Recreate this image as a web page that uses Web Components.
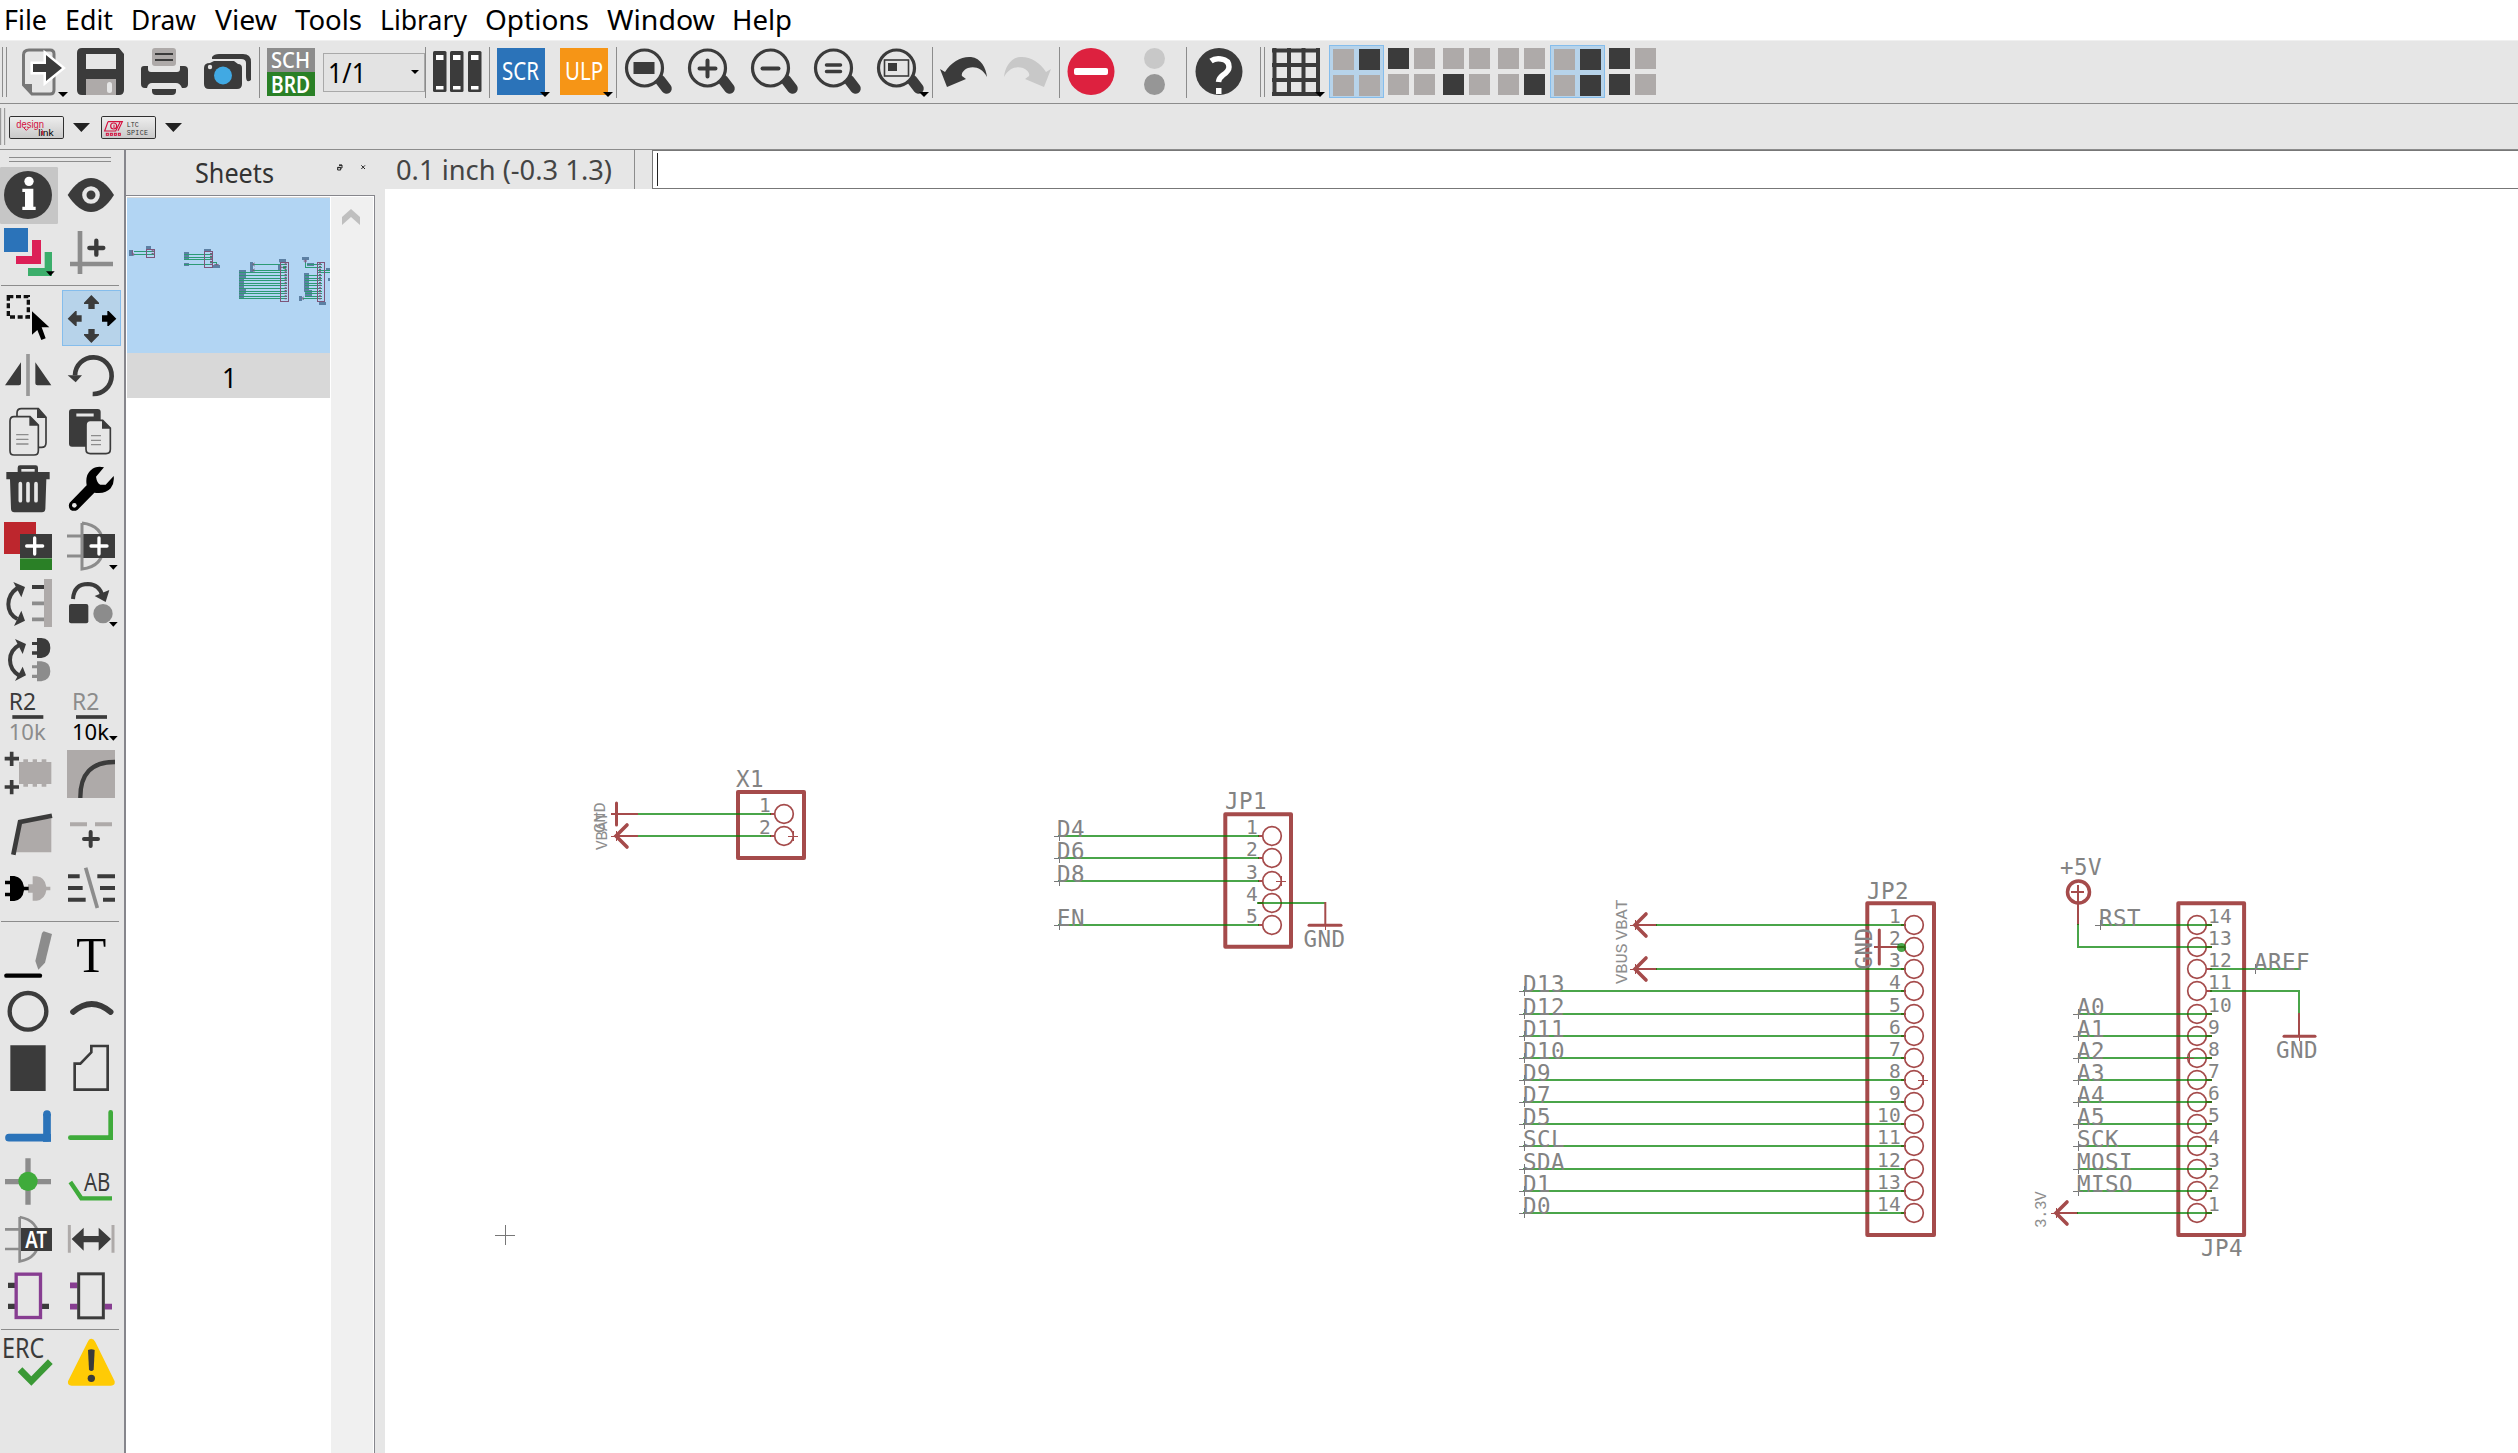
<!DOCTYPE html>
<html lang="en">
<head>
<meta charset="utf-8">
<title>Schematic editor</title>
<style>
html,body{margin:0;height:100%;overflow:hidden;background:#e6e6e6}
body{font-family:"Noto Sans","Open Sans",sans-serif;color:#000}
</style>
</head>
<body>
<schematic-app></schematic-app>
<script>
const D='#3b3b3b', G='#8c8c8c', L='#aeaaa9';

/* Text set to an exact width */
class FitText extends HTMLElement{
  connectedCallback(){
    const w=+this.getAttribute('w'), s=+this.getAttribute('size')||28, t=this.getAttribute('text');
    this.attachShadow({mode:'open'}).innerHTML=`<style>:host{display:block;flex:none;width:${w}px;height:40px}svg{display:block;overflow:visible}</style>
    <svg width="${w}" height="40"><text x="0" y="30" font-size="${s}" fill="currentColor" textLength="${w}" lengthAdjust="spacingAndGlyphs">${t}</text></svg>`;
  }
}
customElements.define('fit-text',FitText);

class MenuBar extends HTMLElement{
  connectedCallback(){
    const m=[['File',4,43],['Edit',65,48],['Draw',131,65],['View',215,62],['Tools',295,67],['Library',380,87],['Options',485,104],['Window',607,108],['Help',732,60]];
    let e=0;
    this.attachShadow({mode:'open'}).innerHTML=`<style>:host{display:flex;height:40px;background:#fff;border-bottom:1px solid #f0f0f0;color:#000}</style>`+
      m.map(([t,x,w])=>{const g=x-e;e=x+w;return `<fit-text text="${t}" w="${w}" size="27.5" style="margin-left:${g}px"></fit-text>`}).join('');
  }
}
customElements.define('menu-bar',MenuBar);

/* Main toolbar: every icon is drawn in window coordinates */
const tri=(x,y=92)=>`<path d="M${x} ${y}h10l-5 5z" fill="#000"/>`;
const sep=x=>[x,1,`<path d="M${x+.5} 47V98" stroke="#8c8c8c"/>`];
const lens=(x,inner)=>`<path d="M${x+35} 80L${x+41.5} 88.500" stroke="${D}" stroke-width="10.5" stroke-linecap="round"/><circle cx="${x+19.5}" cy="68" r="18" fill="#e6e6e6" stroke="${D}" stroke-width="3.2"/>${inner}`;
const tile=(x,p,sel)=>{const o=sel?1:0;return [x,55,(sel?`<rect x="${x+.5}" y="45.5" width="54" height="52" fill="#b7d3ea" stroke="#85bdec"/>`:'')+
  [0,1,2,3].map(i=>`<rect x="${x+4+(i%2)*26}" y="${48+o+(i>1?26:0)}" width="21" height="21" fill="${p[i]=='1'?D:L}"/>`).join('')]};
const vt=(t,x,y,s,w,c,b='')=>`<text x="${x}" y="${y}" font-size="${s}" textLength="${w}" lengthAdjust="spacingAndGlyphs" fill="${c}" ${b}>${t}</text>`;
const top1=[
 [2,5,`<path d="M2.5 47V97M6.5 47V97" stroke="#8c8c8c"/>`],
 [16,48,`<path d="M29 50H50Q54 50 54 54V90Q54 94 50 94H32L23.500 85V55Q23.500 50 29 50Z" fill="#e6e6e6" stroke="#777" stroke-width="3"/><path d="M24 84H32V94Z" fill="#777"/><path d="M33 64H46V55L62 68L46 81V72H33Z" fill="${D}" stroke="#fff" stroke-width="5" paint-order="stroke"/>${tri(58)}`],
 [77,48,`<path d="M82 48H119L124 54V90Q124 95 119 95H82Q77 95 77 90V53Q77 48 82 48Z" fill="${D}"/><rect x="86" y="54" width="30" height="15" fill="#e6e6e6"/><path d="M86 79H116V95H86Z" fill="${L}"/><rect x="107" y="82" width="5" height="11" rx="2.500" fill="#e6e6e6"/>`],
 [140,48,`<rect x="152" y="48" width="24" height="18" rx="3" fill="${L}"/><path d="M155 54H173M155 60H173" stroke="${D}" stroke-width="2"/><path d="M141 69Q141 66 144 66H148V69Q148 72 151 72H177Q180 72 180 69V66H184Q188 66 188 70V84Q188 88 184 88H182Q180 83 176 83H152Q148 83 147 88H145Q141 88 141 84Z" fill="${D}"/><path d="M152 89H176V91Q176 95 172 95H156Q152 95 152 91Z" fill="${D}"/>`],
 [204,48,`<path d="M212 57Q214 54 219 54H243Q251 54 251 62V80Q246 84 246 76V63Q246 59 241 59H212Z" fill="${D}"/><path d="M210 63L214 61H234L238 64Q242 64 242 68V84Q242 89 237 89H209Q204 89 204 84V68Q204 63 210 63Z" fill="${D}"/><circle cx="223" cy="75.500" r="9" fill="#41a9e3"/><circle cx="210" cy="67" r="2.200" fill="#e6e6e6"/>`],
 sep(259),
 [267,48,`<rect x="267" y="48" width="48" height="24" fill="#8c8c8c"/><rect x="267" y="72" width="48" height="24" fill="#2a8026"/>${vt('SCH',271,68,22.5,39,'#fff','font-weight="500"')}${vt('BRD',271,93,22.5,39,'#fff','font-weight="600"')}`],
 [323,102,`<rect x="323.500" y="53.500" width="101" height="38" fill="#e3e3e3" stroke="#a9a9a9"/>${vt('1/1',328,83,28,38,'#000')}<path d="M411 70h8l-4 4z"/>`],
 sep(425),
 [433,48,[433,450,468].map(x=>`<rect x="${x}" y="51" width="13.500" height="41" rx="1.500" fill="${D}"/><path d="M${x+3} 55h7.500v5h-7.500zM${x+3} 86h7.500v3.500h-7.500z" fill="#fff"/>`).join('')],
 sep(489),
 [497,48,`<rect x="497" y="48" width="48" height="47" fill="#2b73b9"/>${vt('SCR',502,80,25,37,'#fff')}${tri(540)}`],
 [560,48,`<rect x="560" y="48" width="48" height="47" fill="#f69516"/>${vt('ULP',565,80,25,38,'#fff')}${tri(603)}`],
 sep(616),
 [625,48,lens(625,`<rect x="633.500" y="62" width="21" height="12" fill="${D}"/>`)],
 [688,48,lens(688,`<path d="M699.500 68.500h16M707.500 60.500v16" stroke="${D}" stroke-width="4" stroke-linecap="round"/>`)],
 [751,48,lens(751,`<path d="M762.500 68.500h16" stroke="${D}" stroke-width="4" stroke-linecap="round"/>`)],
 [814,48,lens(814,`<path d="M826.500 65h14M826.500 71.500h14" stroke="${D}" stroke-width="3.500" stroke-linecap="round"/>`)],
 [877,48,lens(877,`<rect x="884.500" y="60" width="24" height="16" fill="none" stroke="${D}" stroke-width="1.600"/><rect x="888" y="63" width="9" height="8" fill="${D}"/>`)+tri(919)],
 sep(932),
 [940,48,`<path d="M940 69L945 72C951 62 962 56 971 57C981 58 986 68 987 77C982 68 975 66 968 68C963 70 961 74 962 76L966 79L947 87Z" fill="${D}"/>`],
 [1004,48,`<path d="M1051 69L1046 72C1040 62 1029 56 1020 57C1010 58 1005 68 1004 77C1009 68 1016 66 1023 68C1028 70 1030 74 1029 76L1025 79L1044 87Z" fill="#c8c8c8"/>`],
 sep(1059),
 [1068,48,`<circle cx="1091" cy="71.500" r="23.500" fill="#dd213f"/><rect x="1074" y="68" width="34" height="7" rx="2" fill="#fff"/>`],
 [1143,24,`<circle cx="1154.500" cy="58.500" r="10.500" fill="#c8c8c8"/><circle cx="1154.500" cy="84.500" r="10.500" fill="#969696"/>`],
 sep(1186),
 [1195,48,`<circle cx="1219" cy="71.500" r="23.500" fill="${D}"/><path d="M1211 61Q1215 58 1221 59Q1229 60 1229 67Q1229 71 1223 75Q1219 78 1218.500 82" fill="none" stroke="#fff" stroke-width="5.500"/><path d="M1216 88h5.500v6h-5.500z" fill="#fff"/>`],
 [1260,6,`<path d="M1260.500 47V97M1264.500 47V97" stroke="#8c8c8c"/>`],
 [1272,48,`<path d="M1272 50.500H1320M1272 65H1320M1272 80H1320M1272 94H1320M1274.500 48V96M1289 48V96M1303.500 48V96M1318 48V96" stroke="${D}" stroke-width="4"/>${tri(1315)}`],
 tile(1329,'0100',1),tile(1384,'1000'),tile(1439,'0010'),tile(1494,'0001'),tile(1550,'0101',1),tile(1605,'1010')
];
class ToolBar extends HTMLElement{
  connectedCallback(){
    let e=0;
    this.attachShadow({mode:'open'}).innerHTML=`<style>:host{display:flex;height:55px;padding-top:7px;border-bottom:1px solid #8c8c8c;background:#e6e6e6}svg{flex:none;overflow:visible;font-family:"Noto Sans",sans-serif}</style>`+
     top1.map(([x,w,c])=>{const g=x-e;e=x+w;return `<svg style="margin-left:${g}px" width="${w}" height="48" viewBox="${x} 48 ${w} 48">${c}</svg>`}).join('');
  }
}
customElements.define('tool-bar',ToolBar);

class PluginBar extends HTMLElement{
  connectedCallback(){
    this.attachShadow({mode:'open'}).innerHTML=`<style>:host{display:flex;height:45px;border-bottom:1px solid #8c8c8c;background:#e6e6e6}svg{overflow:visible;font-family:"Liberation Mono",monospace}</style>
    <svg width="200" height="45" viewBox="0 312 600 135">
    <defs><linearGradient id="b" x2="0" y2="1"><stop offset="0" stop-color="#eee"/><stop offset="1" stop-color="#c9c9c9"/></linearGradient></defs>
    <path d="M2 324V435M14 324V435" stroke="#8c8c8c" stroke-width="3"/>
    <rect x="28.500" y="349.500" width="162" height="66" rx="4" fill="url(#b)" stroke="#303030" stroke-width="3"/>
    <rect x="304.500" y="349.500" width="162" height="66" rx="4" fill="url(#b)" stroke="#303030" stroke-width="3"/>
    <text x="49" y="384" font-size="32" textLength="83" lengthAdjust="spacingAndGlyphs" fill="#d4103f" font-family="Liberation Sans">design</text>
    <path d="M72 384l7 7 6-6" fill="none" stroke="#d4103f" stroke-width="3"/>
    <text x="115" y="407" font-size="25" textLength="46" lengthAdjust="spacingAndGlyphs" font-family="Liberation Sans">link</text><path d="M127 391V405" stroke="#d4103f" stroke-width="3"/>
    <path d="M219 369H270L244 396ZM495 369H546L520 396Z" fill="#222"/>
    <path d="M324 365H367L354 392M324 365L314 393H347L360 367" fill="none" stroke="#d4103f" stroke-width="3.500"/><circle cx="341" cy="378" r="9" fill="none" stroke="#d4103f" stroke-width="3.500"/><path d="M342 374V384" stroke="#d4103f" stroke-width="3"/>
    <g fill="none" stroke="#d4103f" stroke-width="3"><rect x="319" y="400" width="6" height="6"/><rect x="331" y="400" width="6" height="6"/><rect x="343" y="400" width="6" height="6"/><rect x="355" y="400" width="6" height="6"/></g>
    <text x="380" y="382" font-size="20" textLength="36" fill="#333">LTC</text><text x="380" y="405" font-size="20" textLength="64" fill="#333">SPICE</text></svg>`;
  }
}
customElements.define('plugin-bar',PluginBar);

/* Tool palette: two columns, drawn at three units per pixel */
const t3=(x,y)=>`<path d="M${x} ${y}h26l-13 14z" fill="#000"/>`;
const P=(d,c,w,x='')=>`<path d="${d}" fill="none" stroke="${c}" stroke-width="${w}" ${x}/>`;
const F=(d,c=D)=>`<path d="${d}" fill="${c}"/>`;
const R='stroke-linecap="round"';
const plug=(x,y,c)=>F(`M${x} ${y+2}H${x+15}V${y-10}H${x+28}Q${x+55} ${y-8} ${x+55} ${y+20}Q${x+55} ${y+46} ${x+28} ${y+50}H${x+15}V${y+40}H${x}V${y+30}H${x+15}V${y+11}H${x}Z`,c);
const tools=[
[[81,`<rect y="81" width="174" height="171" rx="4" fill="#c6c6c6"/><circle cx="84" cy="165" r="72" fill="${D}"/><circle cx="87" cy="124" r="14" fill="#fff"/>${F('M67 146H100V200H107V210H67V200H75V156H67Z','#fff')}`,
  F('M203 165Q236 114 273 114Q310 114 342 165Q310 216 273 216Q236 216 203 165Z')+`<circle cx="273" cy="165" r="20" fill="none" stroke="#e6e6e6" stroke-width="13"/>`],
 [252,F('M12 264H84V336H12Z','#2b73b9')+F('M96 300H123V372H48V348H96Z','#dc1f57')+F('M134 336H156V408H84V384H134Z','#3bae6b')+t3(138,394),
  P('M240 273V402M210 372H339',G,14)+P('M289 302V344M268 324H310',D,13,R)]],
[[450,`<path d="M25 470H85V531H25Z" fill="none" stroke="#111" stroke-width="10" stroke-dasharray="15 8"/>`+F('M96 514L148 562H125L137 595L124 600L112 570L96 584Z','#000'),
  `<rect x="187.500" y="451.500" width="174" height="165" fill="#b7d3ea" stroke="#85bdec" stroke-width="3"/>`+F('M274 465L297 488V492H284V507H265V492H252V488ZM274 609L297 586V582H284V567H265V582H252V586ZM203 536L226 513H230V526H245V545H230V558H226Z')+F('M349 536L326 513H322V526H306V545H322V558H326Z','#000')],
 [621,P('M84 642V768','#999',11)+F('M63 667V730Q63 736 57 736H15ZM106 667V730Q106 736 112 736H154Z'),
  P('M278 762A55 55 0 1 0 225 706',D,14)+F('M203 706H246L227 727Z')],
 [792,`<g fill="#e6e6e6" stroke="${D}" stroke-width="5"><path d="M64 806H115L138 832V908Q138 922 124 922H64Q51 922 51 909V819Q51 806 64 806Z"/><path d="M42 830H90L115 855V932Q115 945 102 945H42Q30 945 30 932V843Q30 830 42 830Z"/></g>`+F('M88 829V857H116ZM111 805V834H140Z')+P('M50 884H84M50 898H84M50 912H84',G,4,R),
  `<rect x="207" y="807" width="95" height="113" rx="9" fill="${D}"/><path d="M229 825H281" stroke="#e6e6e6" stroke-width="9"/><path d="M271 841H308L331 864V928Q331 941 318 941H271Q258 941 258 928V854Q258 841 271 841Z" fill="#e6e6e6" stroke="${D}" stroke-width="5"/>`+F('M306 839V866H333Z')+P('M273 887H303M273 901H303M273 914H303',G,4)],
 [963,F('M53 996V983Q53 976 60 976H107Q114 976 114 983V996H149V1018H139L136 1107Q135 1117 126 1117H43Q34 1117 33 1107L30 1018H19V996Z')+P('M64 991H104','#e6e6e6',8)+P('M61 1031V1082M84 1031V1082M108 1031V1082','#e6e6e6',11,R),
  F('M312 982Q289 976 273 990Q255 1005 260 1036L209 1088Q203 1099 211 1109Q222 1116 233 1109L283 1058Q316 1063 332 1045Q344 1028 341 1008L317 1034L301 1034Q291 1030 288 1010Z','#000')+`<circle cx="223" cy="1096" r="7" fill="#e6e6e6"/>`],
 [54,F('M12 66H108V162H12Z','#bd262d')+F('M60 102H156V174H60Z')+F('M60 175H156V210H60Z','#2a8026')+P('M104 114V162M80 138H128','#fff',10,R),
  P('M246 69V207Q310 200 310 138T246 69M201 108H246M201 168H246',G,9)+F('M250 102H345V174H250Z')+P('M297 114V162M273 138H321','#fff',10,R)+t3(327,195)],
 [225,P('M52 264Q25 283 25 313T52 357',D,12)+F('M40 246L75 261L64 292ZM42 378L75 362L64 332Z')+F('M132 237H156V381H132Z',L)+P('M96 261H132',D,12)+P('M96 310H132M96 358H132',G,11),
  P('M219 297Q222 252 264 252Q298 253 307 287',D,12)+F('M284 288L328 270L317 306Z')+`<rect x="207" y="312" width="58" height="58" rx="6" fill="${D}"/><circle cx="309" cy="341" r="29" fill="${G}"/>`+t3(327,366)],
 [396,P('M58 435Q30 450 30 480T58 527',D,12)+F('M45 417L78 432L68 462ZM45 543L78 526L68 500Z')+plug(96,424,D)+plug(96,494,G),''],
 [567,vt('R2',26,630,68,82,D)+P('M37 651H130',D,11)+vt('10k',26,720,67,111,G),
  vt('R2',216,630,68,82,G)+P('M228 651H321',D,11)+vt('10k',216,720,67,111,'#000')+t3(327,708)],
 [738,P('M35 755V798M14 776H57M35 840V883M14 861H57',D,11)+F('M57 786H70V778H84V786H98V778H111V786H125V778H139V786H154V852H139V860H125V852H111V860H98V852H84V860H70V852H57Z',L),
  F('M201 750H345V894H201Z',L)+P('M241 894Q240 785 345 786',D,13)],
 [909,F('M61 965L154 955V1057H43Z',L)+P('M40 1064L60 966L156 947',D,14),
  P('M210 973H261M285 973H336',L,12)+P('M272 996V1038M252 1017H294',D,12,R)],
 [1080,F('M84 1153H98V1129H110Q135 1132 139 1160H151V1171H139Q135 1199 110 1202H98V1178H84Z',L)+F('M15 1142H30V1128H43Q68 1132 72 1160H86V1171H72Q68 1200 43 1203H30V1189H15V1178H30V1153H15Z','#000'),
  P('M204 1129H239M292 1129H345M204 1164H248M300 1164H345M204 1199H257M309 1199H345',D,12)+P('M257 1103L292 1224',G,11)]],
[[48,P('M19 197H120','#000',13,R)+F('M131 64L156 72L135 158L115 179L106 153L126 69Z',G),
  `<text x="229" y="185" font-size="154" font-family="Liberation Serif" textLength="90" lengthAdjust="spacingAndGlyphs">T</text>`],
 [219,`<circle cx="84" cy="304" r="55" fill="none" stroke="${D}" stroke-width="13"/>`,P('M219 306Q275 258 332 306',D,17,R)],
 [390,F('M31 406H137V543H31Z'),P('M274 408H323V539H224V461H241L274 427Z',D,8)],
 [561,P('M27 683H141',"#2b73b9",23,R)+P('M141 612V695',"#2b73b9",23)+`<circle cx="141" cy="612" r="11.500" fill="#2b73b9"/>`+F('M129 672H153V695H129Z','#2b73b9'),
  P('M211 683H332V607','#3fab3b',14,R)+F('M325 676H339V690H325Z','#3fab3b')],
 [732,P('M84 745V884M15 815H153',G,16)+`<circle cx="84" cy="814" r="29" fill="#3fab3b"/>`,
  vt('AB',252,843,77,79,D)+P('M211 816L244 865H336','#3fab3b',13)],
 [903,P('M59 921V1054Q116 1045 116 988T59 921M15 958H59M15 1017H59',G,8)+F('M63 954H156V1023H63Z')+vt('AT',76,1013,68,65,'#fff','font-weight="600"'),
  P('M208 945V1028M339 945V1028',L,9)+F('M215 987L251 953V978H296V953L333 987L296 1022V997H251V1022Z')],
 [1074,P('M24 1126H45M24 1189H45M125 1189H147',D,16)+`<rect x="48.500" y="1092.500" width="73" height="130" fill="none" stroke="#873d91" stroke-width="10"/>`,
  P('M210 1126H232M210 1190H232M314 1190H336','#873d91',17)+`<rect x="236" y="1091.500" width="74" height="132" fill="none" stroke="${D}" stroke-width="9"/>`]],
[[1272,vt('ERC',6,1343,80,127,D)+P('M60 1379L94 1413L151 1355','#3a9935',20),
  F('M274 1286Q281 1286 286 1296L344 1414Q346 1427 333 1427H215Q202 1427 204 1414L263 1296Q267 1286 274 1286Z','#ffcb05')+F('M264 1320Q274 1315 284 1320L281 1379Q274 1387 267 1379Z')+`<circle cx="274" cy="1405" r="11" fill="${D}"/>`]]
];
class ToolPalette extends HTMLElement{
  connectedCallback(){
    this.attachShadow({mode:'open'}).innerHTML=`<style>:host{display:flex;flex-direction:column;flex:none;background:#e6e6e6;border-right:2px solid #86868c;box-sizing:border-box;width:126px;padding-top:7px}
    .h{height:3px;margin:0 13px 5px 9px;border:solid #8c8c8c;border-width:1px 0;flex:none}.r{display:flex;gap:3px;height:57px;flex:none}svg{flex:none;overflow:visible;font-family:"Noto Sans",sans-serif}.s{height:1px;margin:4px 5px 4px 1px;background:#8c8c8c;flex:none}</style><div class="h"></div>`+
    tools.map(g=>g.map(([y,a,b])=>`<div class="r"><svg width="59" height="57" viewBox="0 ${y} 177 171">${a}</svg><svg width="59" height="57" viewBox="186 ${y} 177 171">${b}</svg></div>`).join('')).join('<div class="s"></div>');
  }
}
customElements.define('tool-palette',ToolPalette);

class SheetsPanel extends HTMLElement{
  connectedCallback(){
    const c='#2c9a74',r='#7d5579',lb='#5c80a3';
    const bx=a=>a.map(([x,y,w,h])=>`<rect x="${x}" y="${y}" width="${w}" height="${h}" fill="${lb}"/>`).join('');
    const snap=y=>27+3*Math.floor((y-27)/3)+1.5;
    const ln=(x1,x2,ys)=>ys.map(y=>`M${x1} ${snap(y)}H${x2}`).join('');
    this.attachShadow({mode:'open'}).innerHTML=`<style>:host{display:flex;flex-direction:column;width:259px;flex:none;background:#e6e6e6;color:#333}
    .hd{height:45px;display:flex;flex:none;padding-left:69px;align-items:flex-start}.hd svg{overflow:visible}
    .b{flex:1;width:246px;border:solid #86868c;border-width:1px 1px 0 0;background:#fff;display:flex;justify-content:space-between;padding:1px 1px 0 1px}
    .c{height:201px;width:203px;background:#d8d8d8}.c svg{display:block;margin-top:1px}.n{width:14px;margin:5px auto 0;color:#000}
    .sb{width:42px;background:#f0f0f0}.sb svg{display:block;margin:11px 0 0 10px}</style>
    <div class="hd"><fit-text text="Sheets" w="79" size="27.5" style="margin-top:3px"></fit-text><svg width="40" height="20" style="margin:15px 0 0 62px" viewBox="0 51 120 60"><path d="M9 51h9v9h-3M5 58h9v8H5zM9 52h9M5 59h9" fill="none" stroke="#222" stroke-width="3"/><path d="M76 52l11 11M87 52l-11 11" stroke="#222" stroke-width="3"/></svg></div>
    <div class="b"><div class="c"><svg width="203" height="155" viewBox="21 27 609 465"><rect x="21" y="27" width="609" height="465" fill="#b2d5f3"/>
    ${bx([[27,183,12,18],[78,171,15,11],[192,189,15,24],[192,222,15,9],[252,180,21,8],[278,228,22,9],[390,219,9,30],[477,210,21,10],[474,225,9,21],[357,243,21,24],[357,267,15,32],[357,299,21,16],[357,315,15,15],[546,204,21,9],[561,222,21,9],[618,237,12,9],[624,267,6,9],[552,252,15,57],[555,303,21,20],[537,321,9,15],[597,339,21,9]])}
    <path d="${ln(42,102,[187,196])}${ln(192,276,[196,205,211,226])}M270 220.500H289.500V227${ln(400,500,[226,244])}${ln(357,500,[250,259,268,274,283,289,298,307,313,322,328])}M556.500 220V235.500H606M561 226.500H606M594 244.500H630M594 250.500H630${ln(555,606,[259,268,274,283,289,298,307,313,322])}M549 328.500H606" fill="none" stroke="${c}" stroke-width="3" shape-rendering="crispEdges"/>
    <g fill="none" stroke="${r}" stroke-width="3"><path d="M79.500 181.500H103.500V205.500H79.500ZM253.500 187.500H277.500V235.500H253.500ZM481.500 220.500H505.500V337.500H481.500ZM592.500 220.500H613.500V337.500H592.500Z" shape-rendering="crispEdges"/><path d="M37 184v14M41 193v7M283 227h13M404 222l-6 4 6 5M404 240l-6 4 6 5M482 228v15M482 235h18M551 216h10M556 212v9M551 324l-5 4 5 5"/><path d="M98 184v15M273 192v38M497 223v108M600 223v108" stroke-dasharray="4 4" stroke-width="6"/></g><rect x="489" y="232" width="9" height="7" fill="#22865f"/></svg>
    <div class="n"><fit-text text="1" w="15" size="28"></fit-text></div></div>
    <div class="sb"><svg width="20" height="18" viewBox="0 0 20 18"><path d="M1 9L10 1L19 9V17L10 9L1 17Z" fill="#bfbfbf"/></svg></div></div>`;
  }
}
customElements.define('sheets-panel',SheetsPanel);

class CommandRow extends HTMLElement{
  connectedCallback(){
    this.attachShadow({mode:'open'}).innerHTML=`<style>:host{display:flex;height:39px;flex:none;background:#e6e6e6;color:#444}.v{width:1px;height:39px;margin-left:22px;background:#8c8c8c}
    .i{flex:1;margin-left:17px;height:37px;background:#fff;border:solid #777;border-width:1px 0 1px 1px;display:flex}.i span{width:1px;height:33px;margin:2px 0 0 4px;background:#222}</style>
    <fit-text text="0.1 inch (-0.3 1.3)" w="216" size="27" style="margin-left:11px"></fit-text><div class="v"></div><div class="i"><span></span></div>`;
  }
}
customElements.define('command-row',CommandRow);

class SchematicCanvas extends HTMLElement{
  connectedCallback(){
    const W='rgba(0,128,0,.71)',M='#a54b4b',o=[];
    const wire=d=>o.push(`<path d="${d}" fill="none" stroke="${W}" stroke-width="2"/>`);
    const red=(d,w=2)=>o.push(`<path d="${d}" fill="none" stroke="${M}" stroke-width="${w}" stroke-linecap="${w>2?'round':'butt'}"/>`);
    const cross=(x,y,c='#777',s=5)=>o.push(`<path d="M${x-s} ${y+.5}H${x+s}M${x+.5} ${y-s}V${y+s}" stroke="${c}"/>`);
    const box=(x,y,w,h)=>o.push(`<rect x="${x}" y="${y}" width="${w}" height="${h}" fill="none" stroke="${M}" stroke-width="4" stroke-linejoin="round"/>`);
    const label=(t,x,y)=>o.push(`<text x="${x-1}" y="${y+.5}" font-size="22.500" letter-spacing=".450">${t}</text>`);
    const pin=(t,x,y,a='end')=>o.push(`<text x="${x}" y="${y}" font-size="19.500" letter-spacing=".26" text-anchor="${a}">${t}</text>`);
    const vert=(t,x,y,s=15.5,l=.7)=>o.push(`<text transform="translate(${x} ${y}) rotate(-90)" font-size="${s}" letter-spacing="${l}" ${s<20?'font-family="Liberation Mono" style="fill:#8e8e8e"':''}>${t}</text>`);
    const ring=(x,y)=>o.push(`<circle cx="${x}" cy="${y}" r="9.300" fill="none" stroke="${M}" stroke-width="1.700"/>`);
    const arrow=(x,y)=>{red(`M${x+11} ${y-11}L${x} ${y}L${x+11} ${y+11}`,3.6);red(`M${x} ${y}h22`);cross(x,y,M)};
    const ys=[925,947,969,991,1014,1036,1058,1080,1102,1124,1146,1169,1191,1213];

    label('X1',737,786.5);box(738,792,66,66);
    [814,836].forEach((y,i)=>{ring(784,y);red(`M770 ${y}h5`);pin(i+1,771,y-2);wire(`M637 ${y}H771`)});
    red('M616.500 803V825',3);red('M611 814H638');arrow(616,836);cross(793,836,M);
    vert('GND',605,833,17,0);vert('VBAT',607,850,16,-.1);

    label('JP1',1226,808.5);box(1225.3,814.3,65.7,132.4);
    [836,858,881,903,925].forEach((y,i)=>{ring(1272,y);red(`M1258 ${y}h5`);pin(i+1,1258,y-2.5);
      if(i!=3){wire(`M1058 ${y}H1259`);cross(1059,y);label(['D4','D6','D8','','EN'][i],1058,y)}});
    wire('M1257 903H1326');red('M1325.300 902V925');red('M1309 925.300H1341',3);cross(1325,925,M);label('GND',1304.5,946.5);cross(1281,881,M);

    label('JP2',1868,898);box(1867.3,903.3,66.7,331.6);
    const n=['D13','D12','D11','D10','D9','D7','D5','SCL','SDA','D1','D0'];
    ys.forEach((y,i)=>{ring(1914,y);if(i!=1){red(`M1901 ${y}h5`)}pin(i+1,1901,y-2.5);
      if(i>2){wire(`M1523 ${y}H1904`);cross(1524,y);label(n[i-3],1524,y)}});
    [925,969].forEach(y=>{arrow(1635,y);wire(`M1656 ${y}H1904`)});
    red('M1879.300 930V964',3);red('M1874 947H1905');o.push(`<circle cx="1901.500" cy="947.500" r="4.600" fill="${W}"/>`);
    vert('GND',1872,969.5,22.5,.45);vert('VBAT',1627,940,17,0);vert('VBUS',1627,984,17,0);cross(1923,1080,M);

    box(2178.3,903.3,65.8,331.6);label('JP4',2202,1255);label('+5V',2061,874);
    const m=['RST','','','','A0','A1','A2','A3','A4','A5','SCK','MOSI','MISO',''];
    ys.forEach((y,i)=>{ring(2197,y);red(`M2206 ${y}h6`);pin(14-i,2208,y-2.5,'start');
      if(m[i]){const x=i?2078:2100;wire(`M${x} ${y}H2212`);cross(x,y);label(m[i],x,y)}});
    o.push(`<circle cx="2078.500" cy="892" r="11" fill="none" stroke="${M}" stroke-width="3.500"/>`);
    red('M2071 892H2084M2078 885V925');wire('M2078 924V947H2212');
    wire('M2210 969H2300');cross(2255,969);label('AREF',2255,969);
    wire('M2210 991H2299V1014');red('M2299 1013V1036');red('M2284 1036.300H2315',3);cross(2299,1036,M);label('GND',2277,1057.5);
    arrow(2056,1213);wire('M2077 1213H2212');vert('3.3V',2046,1228,16,-.6);cross(2189,1058,M);
    cross(505,1235,'#777',10);
    this.attachShadow({mode:'open'}).innerHTML=`<style>:host{display:block;flex:1;background:#fff;overflow:hidden}svg{display:block}text{fill:#838383}</style>
    <svg width="2133" height="1264" viewBox="385 189 2133 1264" font-family="DejaVu Sans Mono, monospace">${o.join('')}</svg>`;
  }
}
customElements.define('schematic-canvas',SchematicCanvas);

class SchematicApp extends HTMLElement{
  connectedCallback(){
    this.attachShadow({mode:'open'}).innerHTML=`<style>:host{display:flex;flex-direction:column;height:100vh;background:#e6e6e6}.m{display:flex;flex:1;min-height:0}.w{display:flex;flex-direction:column;flex:1;min-width:0}</style>
    <menu-bar></menu-bar><tool-bar></tool-bar><plugin-bar></plugin-bar>
    <div class="m"><tool-palette></tool-palette><sheets-panel></sheets-panel><div class="w"><command-row></command-row><schematic-canvas></schematic-canvas></div></div>`;
  }
}
customElements.define('schematic-app',SchematicApp);
</script>
</body>
</html>
